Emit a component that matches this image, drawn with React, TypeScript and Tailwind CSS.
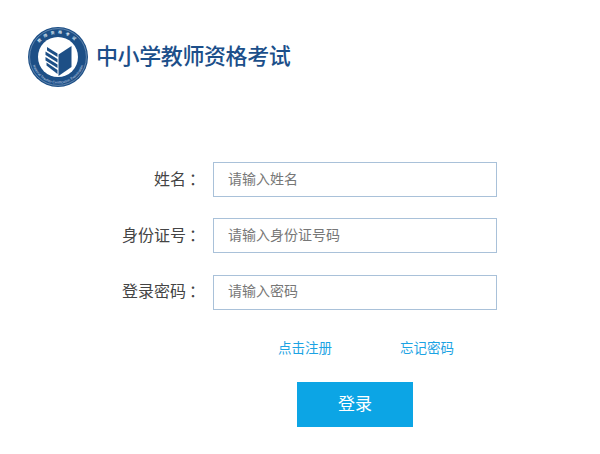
import React from 'react';

const FONT = '"Noto Sans CJK SC", "Liberation Sans", sans-serif';

const FIELDS = [
    { label: '姓名', placeholder: '请输入姓名' },
    { label: '身份证号', placeholder: '请输入身份证号码' },
    { label: '登录密码', placeholder: '请输入密码' },
];

const Logo = () => (
    <svg width="60" height="60" viewBox="0 0 60 60" className="shrink-0">
        <defs>
            <path id="top-arc" d="M 6.6 30 A 23.4 23.4 0 0 1 53.4 30" />
            <path id="bottom-arc" d="M 3.4 30 A 26.6 26.6 0 0 0 56.6 30" />
        </defs>
        <circle cx="30" cy="30" r="30" fill="#1d4f86" />
        <circle cx="30" cy="30" r="28.4" fill="none" stroke="#8fa9c6" strokeWidth="0.6" />
        <circle cx="30" cy="30" r="20" fill="#ffffff" />
        <text fill="#dfe8f2" fontSize="3.8" letterSpacing="3.4" fontFamily={FONT} fontWeight="700">
            <textPath href="#top-arc" startOffset="50%" textAnchor="middle">教师资格考试</textPath>
        </text>
        <text fill="#c9d7e6" fontSize="3.5" fontFamily="Liberation Sans, sans-serif">
            <textPath href="#bottom-arc" startOffset="50%" textAnchor="middle">National Teacher Certification Examination</textPath>
        </text>
        {/* open book: solid right page, chevron stripes on the left */}
        <path d="M30.5 27.5 L43.5 19 V40 L30.5 49 Z" fill="#1d4f86" />
        <path d="M29.5 26.5 L19 20 V23.5 L29.5 30 Z" fill="#1d4f86" />
        <path d="M29.5 32 L17.5 24.5 V28 L29.5 35.5 Z" fill="#1d4f86" />
        <path d="M29.5 37.5 L17.5 30 V33.5 L29.5 41 Z" fill="#1d4f86" />
        <path d="M29.5 43 L18.5 35.5 V38.5 L29.5 47 Z" fill="#1d4f86" />
    </svg>
);

export default function App() {
    return (
        <div className="w-[600px] h-[454px] bg-white overflow-hidden" style={{ fontFamily: FONT }}>
            <div className="flex items-center gap-[8px] pl-[28px] pt-[27px]">
                <Logo />
                <span className="pb-[6px] text-[22px] leading-[54px] font-medium tracking-[-0.4px] text-[#1c4f8a]">中小学教师资格考试</span>
            </div>

            <div className="flex flex-col gap-[21.4px] mt-[75px]">
                {FIELDS.map((field) => (
                    <div key={field.label} className="flex items-center">
                        <label className="flex justify-end w-[213px] pr-[8px] pb-[4px] text-[16px] text-[#444444]">
                            <span>{field.label}</span>
                            <span className="w-[16px] ml-[3px]">：</span>
                        </label>
                        <input
                            type="text"
                            placeholder={field.placeholder}
                            className="w-[284px] h-[35px] px-[14px] pb-[4px] border border-[#a9c1d9] bg-white text-[14px] text-[#555555] placeholder:text-[#777777] outline-none"
                        />
                    </div>
                ))}
            </div>

            <div className="flex mt-[27px] pl-[278px] gap-[68px] text-[13.5px] leading-[20px] text-[#1ca3e3]">
                <a>点击注册</a>
                <a>忘记密码</a>
            </div>

            <button className="block ml-[297px] mt-[25px] w-[116px] h-[45px] pb-[4px] bg-[#0ca5e5] text-white text-[17px]">登录</button>
        </div>
    );
}
